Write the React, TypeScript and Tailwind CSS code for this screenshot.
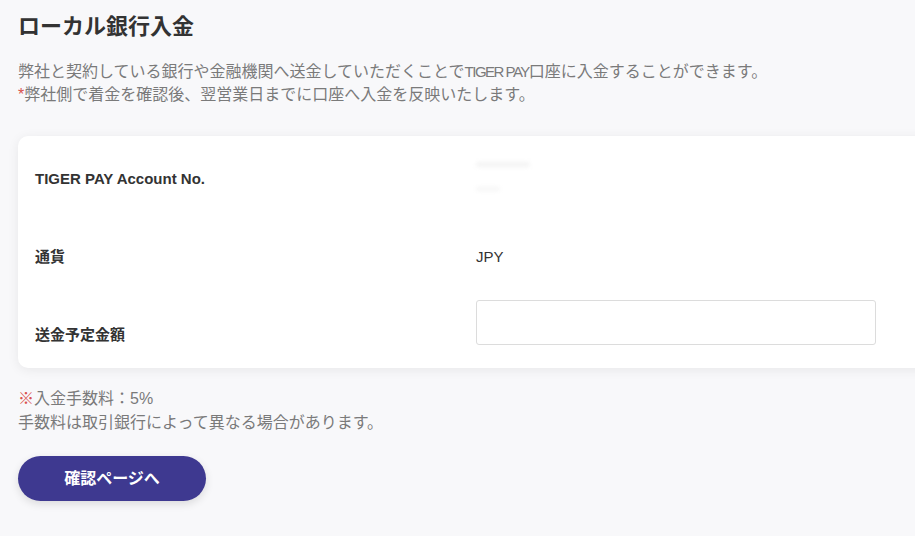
const font = "font-['Liberation_Sans','Noto_Sans_CJK_JP',sans-serif]";

const Row = ({ label, children, className = "" }: { label: string; children?: React.ReactNode; className?: string }) => (
  <div className={`flex ${className}`}>
    <div className="w-[441px] shrink-0 text-[15px] font-bold text-[#333] leading-5">{label}</div>
    <div className="flex-1">{children}</div>
  </div>
);

export default function App() {
  return (
    <div className={`min-h-screen w-full overflow-hidden bg-[#f8f8fa] pl-[18px] pt-[11px] ${font}`}>
      <h1 className="text-[22px] font-bold leading-8 text-[#333]">ローカル銀行入金</h1>

      <div className="mt-[17px] text-[16px] leading-[23px] text-[#7a7a7a]">
        <p>
          弊社と契約している銀行や金融機関へ送金していただくことで
          <span className="text-[15px] tracking-[-1.5px]">TIGER PAY</span>口座に入金することができます。
        </p>
        <p>
          <span className="text-[#d9534f]">*</span>弊社側で着金を確認後、翌営業日までに口座へ入金を反映いたします。
        </p>
      </div>

      <div className="mt-[30px] w-[960px] rounded-[10px] bg-white pl-[17px] pt-[4px] shadow-[0_2px_12px_rgba(0,0,0,0.07)]">
        <Row label="TIGER PAY Account No." className="h-[78px] items-center">
          <div className="-mt-[6px] select-none blur-[2px]">
            <div className="h-[5px] w-[54px] rounded bg-[#f3f3f3]" />
            <div className="mt-[20px] h-[4px] w-[24px] rounded bg-[#f5f5f5]" />
          </div>
        </Row>
        <Row label="通貨" className="h-[78px] items-center">
          <span className="text-[15px] text-[#333]">JPY</span>
        </Row>
        <div className="flex h-[72px] items-start">
          <div className="mt-[29px] w-[441px] shrink-0 text-[15px] font-bold leading-5 text-[#333]">送金予定金額</div>
          <input
            type="text"
            className="mt-[4px] h-[45px] w-[400px] rounded-[3px] border border-[#dcdcdc] bg-white px-3 text-[15px] outline-none"
          />
        </div>
      </div>

      <div className="mt-[19px] text-[16px] leading-[24px] text-[#7a7a7a]">
        <p>
          <span className="text-[#d9534f]">※</span>入金手数料：5%
        </p>
        <p>手数料は取引銀行によって異なる場合があります。</p>
      </div>

      <button className="mt-[21px] flex h-[45px] w-[188px] items-center justify-center rounded-full bg-[#3e3990] text-[16px] font-bold text-white shadow-[0_3px_8px_rgba(0,0,0,0.12)]">
        確認ページへ
      </button>
      <div className="h-[34px]" />
    </div>
  );
}
